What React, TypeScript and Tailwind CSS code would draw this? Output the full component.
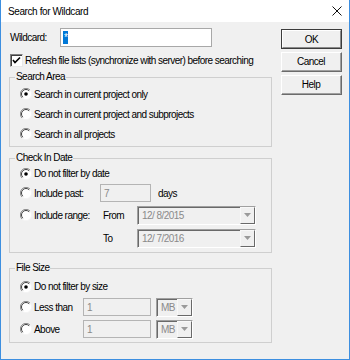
import React from "react";

const font = { fontFamily: '"Liberation Sans", Arial, sans-serif' };

function Radio({ checked }: { checked?: boolean }) {
  return (
    <svg width="12" height="12" viewBox="0 0 12 12" className="shrink-0">
      <circle cx="6" cy="6" r="5.5" fill="#ffffff" />
      <path d="M10 2 A5.5 5.5 0 0 0 2 10" fill="none" stroke="#8a8a8a" strokeWidth="1" />
      <path d="M9.2 2.8 A4.5 4.5 0 0 0 2.8 9.2" fill="none" stroke="#404040" strokeWidth="1" />
      <path d="M2 10 A5.5 5.5 0 0 0 10 2" fill="none" stroke="#f4f4f4" strokeWidth="1" />
      {checked && <circle cx="6" cy="6" r="1.8" fill="#000" />}
    </svg>
  );
}

function Check() {
  return (
    <div className="w-[13px] h-[13px] bg-white border-t border-l border-[#808080] border-r border-b border-r-[#e8e8e8] border-b-[#e8e8e8] shrink-0 relative">
      <div className="absolute inset-0 border-t border-l border-[#404040] border-r-0 border-b-0" />
      <svg width="11" height="11" viewBox="0 0 11 11" className="absolute left-0 top-0">
        <path d="M2 5 L4 7.5 L9 2.5" fill="none" stroke="#000" strokeWidth="1.6" />
      </svg>
    </div>
  );
}

function DisInput({ value, w }: { value: string; w: string }) {
  return (
    <div className={`${w} h-[18px] border border-[#b4b4b4] bg-[#f0f0f0] flex items-center pl-[3px] text-[#8a8a8a]`}>
      {value}
    </div>
  );
}

function Combo({ value, w }: { value: string; w: string }) {
  return (
    <div className={`${w} h-[19px] border-t border-l border-[#a0a0a0] border-r border-b border-r-[#ffffff] border-b-[#ffffff] bg-[#f0f0f0] flex`}>
      <div className="flex-1 border-t border-l border-[#696969] border-r-0 border-b-0 flex items-center pl-[3px] text-[#8a8a8a] whitespace-pre">
        {value}
      </div>
      <div className="w-[15px] h-full border-t border-l border-t-[#f8f8f8] border-l-[#f8f8f8] border-r border-b border-r-[#696969] border-b-[#696969] flex items-center justify-center">
        <svg width="7" height="4" viewBox="0 0 7 4">
          <path d="M0 0 L7 0 L3.5 4 Z" fill="#9a9a9a" />
        </svg>
      </div>
    </div>
  );
}

function Button({ label, def }: { label: string; def?: boolean }) {
  return (
    <div
      className={`w-[61px] h-[20px] flex items-center justify-center text-black bg-[#f0f0f0] ${
        def ? "border border-[#3c3c3c]" : "border-t border-l border-t-[#ffffff] border-l-[#ffffff] border-r border-b border-r-[#6b6b6b] border-b-[#6b6b6b]"
      }`}
    >
      <div
        className={`w-full h-full flex items-center justify-center ${
          def
            ? "border-t border-l border-t-[#ffffff] border-l-[#ffffff] border-r border-b border-r-[#8a8a8a] border-b-[#8a8a8a]"
            : "border-r border-b border-r-[#a0a0a0] border-b-[#a0a0a0]"
        }`}
      >
        {label}
      </div>
    </div>
  );
}

function Group({ title, className, children }: { title: string; className?: string; children: React.ReactNode }) {
  return (
    <div className={`relative border border-[#cfcfcf] ${className ?? ""}`}>
      <span className="absolute left-[5px] top-[-7px] px-[1px] bg-[#f0f0f0] leading-[12px] text-black">
        {title}
      </span>
      {children}
    </div>
  );
}

function RadioRow({ label, checked, className }: { label: string; checked?: boolean; className?: string }) {
  return (
    <div className={`flex items-center pl-[10px] gap-[2px] ${className ?? ""}`}>
      <Radio checked={checked} />
      <span className="text-black whitespace-nowrap">{label}</span>
    </div>
  );
}

export default function App() {
  return (
    <div style={font} className="w-[350px] h-[360px] bg-[#f0f0f0] border-x border-b border-[#3d8fe0] flex flex-col overflow-hidden text-[10px] tracking-[-0.55px]">
      <div className="h-[22px] bg-white flex items-center justify-between pl-[7px] pr-[7px] shrink-0">
        <span className="text-[10px] tracking-[-0.4px] text-black">Search for Wildcard</span>
        <svg width="10" height="10" viewBox="0 0 10 10">
          <path d="M0.5 0.5 L9.5 9.5 M9.5 0.5 L0.5 9.5" stroke="#111" strokeWidth="1" />
        </svg>
      </div>
      <div className="flex pl-[8px] pr-[7px] gap-[9px]">
        <div className="w-[263px] flex flex-col">
          <div className="mt-[6px] h-[19px] flex items-center">
            <span className="pl-[1px] w-[51px] text-black">Wildcard:</span>
            <div className="w-[152px] h-[19px] bg-white border border-[#a8a8a8] flex items-center pl-[2px]">
              <span className="bg-[#0078d7] text-white leading-[13px] px-[1px]">*</span>
            </div>
          </div>
          <div className="mt-[7px] h-[13px] flex items-center gap-[1px] pl-[1px]">
            <Check />
            <span className="text-black ml-[1px] whitespace-nowrap">Refresh file lists (synchronize with server) before searching</span>
          </div>

          <Group title="Search Area" className="mt-[10px] pt-[6px] pb-[2px]">
            <RadioRow label="Search in current project only" checked className="h-[20px]" />
            <RadioRow label="Search in current project and subprojects" className="h-[20px]" />
            <RadioRow label="Search in all projects" className="h-[20px]" />
          </Group>

          <Group title="Check In Date" className="mt-[11px] pt-[5px] pb-[4px]">
            <RadioRow label="Do not filter by date" checked className="h-[19px]" />
            <div className="h-[20px] flex items-center">
              <RadioRow label="Include past:" className="w-[90px]" />
              <DisInput value="7" w="w-[51px]" />
              <span className="ml-[7px] text-black">days</span>
            </div>
            <div className="mt-[2px] h-[20px] flex items-center">
              <RadioRow label="Include range:" className="w-[93px]" />
              <span className="w-[34px] text-black">From</span>
              <Combo value="12/ 8/2015" w="w-[119px]" />
            </div>
            <div className="mt-[3px] h-[20px] flex items-center">
              <span className="ml-[93px] w-[34px] text-black">To</span>
              <Combo value="12/ 7/2016" w="w-[119px]" />
            </div>
          </Group>

          <Group title="File Size" className="mt-[15px] pt-[8px] pb-[3px]">
            <RadioRow label="Do not filter by size" checked className="h-[19px]" />
            <div className="mt-[1px] h-[20px] flex items-center">
              <RadioRow label="Less than" className="w-[73px]" />
              <DisInput value="1" w="w-[68px]" />
              <div className="ml-[5px]">
                <Combo value="MB" w="w-[37px]" />
              </div>
            </div>
            <div className="mt-[2px] h-[20px] flex items-center">
              <RadioRow label="Above" className="w-[73px]" />
              <DisInput value="1" w="w-[68px]" />
              <div className="ml-[5px]">
                <Combo value="MB" w="w-[37px]" />
              </div>
            </div>
          </Group>
        </div>
        <div className="w-[61px] flex flex-col gap-[3px] mt-[7px]">
          <Button label="OK" def />
          <Button label="Cancel" />
          <Button label="Help" />
        </div>
      </div>
    </div>
  );
}
